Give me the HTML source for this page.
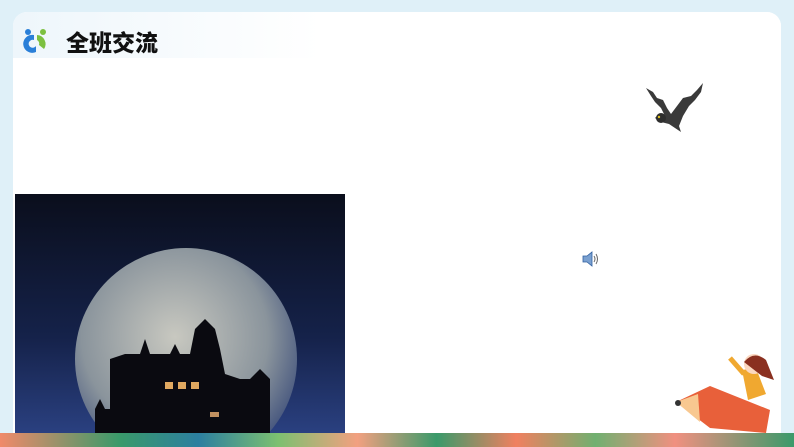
<!DOCTYPE html>
<html style="overflow:hidden"><head><meta charset="utf-8"><style>
html,body{margin:0;width:794px;height:447px;overflow:hidden}
body{background:#dff0f8;position:relative;font-family:"Liberation Sans","Noto Sans CJK SC",sans-serif}
.card{position:absolute;left:13px;top:12px;width:768px;height:422px;background:#fff;border-radius:14px 14px 0 0}
.hdr{position:absolute;left:13px;top:12px;width:768px;height:46px;background:linear-gradient(90deg,#eef6fb,#fff 40%);border-radius:14px 14px 0 0}
.title{position:absolute;left:66px;top:26px;font-size:23px;font-weight:900;color:#111;font-family:"Noto Sans CJK SC",sans-serif;line-height:30px;letter-spacing:0px}
.bottom{position:absolute;left:0;top:433px;width:794px;height:14px;background:linear-gradient(90deg,#f08a6a,#3a9a6a 15%,#2c7fa0 25%,#7cc070 35%,#f2a080 45%,#3a9a6a 55%,#f08060 65%,#70b070 75%,#f09080 85%,#3a9a6a)}
</style></head><body>
<div class="card"></div><div class="hdr"></div>
<svg style="position:absolute;left:22px;top:27px" width="28" height="28" viewBox="0 0 28 28">
<circle cx="6" cy="5" r="3" fill="#2a7fd8"/><circle cx="21" cy="5" r="3" fill="#7cc040"/>
<path d="M12 8 A9 9 0 1 0 14 25 L14 19 A4 4 0 1 1 12 13Z" fill="#2a7fd8"/>
<path d="M15 8 A9 9 0 0 1 22 22 L17 18 A4 4 0 0 0 15 13Z" fill="#7cc040"/></svg>
<div class="title">全班交流</div>
<svg style="position:absolute;left:15px;top:194px" width="330" height="239" viewBox="0 0 330 239">
<defs><radialGradient id="m" cx="0.45" cy="0.4" r="0.6"><stop offset="0" stop-color="#c8c8c0"/><stop offset="0.7" stop-color="#8a949c"/><stop offset="1" stop-color="#4a5a80"/></radialGradient>
<linearGradient id="s" x1="0" y1="0" x2="0" y2="1"><stop offset="0" stop-color="#0a0e1c"/><stop offset="0.6" stop-color="#15224a"/><stop offset="1" stop-color="#2a4080"/></linearGradient></defs>
<rect width="330" height="239" fill="url(#s)"/>
<circle cx="171" cy="165" r="111" fill="url(#m)"/>
<path d="M80 239 L80 215 L85 205 L90 215 L95 215 L95 165 L110 160 L125 160 L130 145 L135 160 L155 160 L160 150 L165 160 L175 160 L180 135 L190 125 L200 135 L205 155 L210 180 L225 185 L235 185 L245 175 L255 185 L255 239Z" fill="#0a0a10"/>
<rect x="150" y="188" width="8" height="7" fill="#e0a860"/><rect x="163" y="188" width="8" height="7" fill="#e0a860"/><rect x="176" y="188" width="8" height="7" fill="#e0a860"/>
<rect x="195" y="218" width="9" height="5" fill="#c09060"/>
</svg>
<svg style="position:absolute;left:645px;top:82px" width="60" height="52" viewBox="0 0 60 52">
<path d="M1 6 L8 10 L12 16 L18 18 L22 26 L26 32 L32 24 L38 16 L46 14 L52 8 L58 1 L56 10 L50 18 L44 24 L38 34 L34 44 L36 50 L30 46 L24 42 L16 40 L10 36 L14 32 L20 34 L16 26 L10 20 L6 14Z" fill="#3a3a3a"/>
<circle cx="16" cy="36" r="5" fill="#2e2e2e"/><circle cx="14" cy="35" r="1.2" fill="#e0c020"/></svg>
<svg style="position:absolute;left:582px;top:251px" width="18" height="16" viewBox="0 0 18 16"><path d="M1 5 H5 L10 1 V15 L5 11 H1Z" fill="#7aa0d0" stroke="#3060a0" stroke-width="0.8"/><path d="M12 5 Q14 8 12 11 M14 3 Q17 8 14 13" stroke="#666" fill="none"/></svg>
<svg style="position:absolute;left:670px;top:350px" width="112" height="83" viewBox="0 0 112 83">
<path d="M6 52 L40 36 L100 60 L96 83 L40 78Z" fill="#e8603a"/><path d="M6 52 L28 44 L30 72Z" fill="#f8c890"/><circle cx="8" cy="53" r="3" fill="#333"/>
<path d="M72 20 L86 18 L96 44 L78 50Z" fill="#f0a830"/><circle cx="84" cy="14" r="10" fill="#fbd8c0"/><path d="M74 12 Q84 0 96 10 L104 30 L92 26Z" fill="#8a3020"/><path d="M60 8 L74 24" stroke="#f0a830" stroke-width="5"/></svg>
<div class="bottom"></div>
</body></html>
